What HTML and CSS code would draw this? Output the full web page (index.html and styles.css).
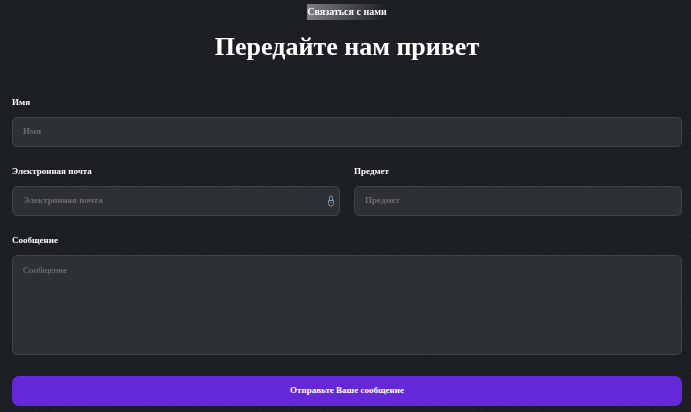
FILE: index.html
```html
<!DOCTYPE html>
<html lang="ru">
<head>
<meta charset="UTF-8" />
<meta name="viewport" content="width=device-width, initial-scale=1.0" />
<title>Связаться с нами</title>
<link rel="stylesheet" href="styles.css">
</head>
<body>

<section class="contact">
  <!-- Заголовок -->
  <header class="contact-header">
    <p class="tagline">Связаться с нами</p>
    <h1 class="title">Передайте нам привет</h1>
  </header>

  <!-- Форма обратной связи -->
  <form class="contact-form">
    <div class="field">
      <label for="name">Имя</label>
      <input type="text" id="name" name="name" placeholder="Имя">
    </div>
    <div class="row">
      <div class="field">
        <label for="email">Электронная почта</label>
        <div class="input-wrap">
          <input type="email" id="email" name="email" placeholder="Электронная почта">
          <svg class="lock" viewBox="0 0 8 12" aria-hidden="true">
            <path d="M2.500 5V2.500a1.500 1.500 0 0 1 3 0V5M1.500 5.500h5v3a2.500 2.500 0 0 1-5 0zM3.500 7.500h1" />
          </svg>
        </div>
      </div>
      <div class="field">
        <label for="subject">Предмет</label>
        <input type="text" id="subject" name="subject" placeholder="Предмет">
      </div>
    </div>
    <div class="field">
      <label for="message">Сообщение</label>
      <textarea id="message" name="message" placeholder="Сообщение"></textarea>
    </div>
    <button type="submit" class="submit">Отправьте Ваше сообщение</button>
  </form>
</section>

<!-- Зернистость фона -->
<svg class="grain" aria-hidden="true">
  <filter id="noise">
    <feTurbulence type="fractalNoise" baseFrequency="0.6" numOctaves="2" />
    <feColorMatrix values="0 0 0 0 1  0 0 0 0 1  0 0 0 0 1  1.2 0 0 0 -0.65" />
  </filter>
  <rect width="100%" height="100%" filter="url(#noise)" />
</svg>

</body>
</html>
```
FILE: styles.css
```css
* {
  box-sizing: border-box;
}

body {
  margin: 0;
  background-color: #1b1e23;
  color: #fff;
  font-family: "Liberation Serif", "Times New Roman", serif;
  font-size: 9px;
  line-height: 12px;
}

.contact {
  padding: 4px 9px 6px 12px;
}

/* Заголовок */
.contact-header {
  display: flex;
  flex-direction: column;
  align-items: center;
  gap: 11px;
  margin-bottom: 33px;
}
.tagline {
  margin: 0;
  font-size: 10px;
  font-weight: bold;
  line-height: 16px;
  background: linear-gradient(to right, #7c7e82, #1b1e23);
}
.title {
  margin: 0;
  font-size: 26px;
  line-height: 32px;
  font-weight: bold;
}

/* Форма */
.contact-form {
  display: flex;
  flex-direction: column;
  gap: 18px;
}
.row {
  display: grid;
  grid-template-columns: 1fr 1fr;
  gap: 14px;
}
.field {
  display: flex;
  flex-direction: column;
  gap: 9px;
}
label {
  font-weight: bold;
}
.input-wrap {
  position: relative;
}
input,
textarea {
  display: block;
  width: 100%;
  height: 30px;
  padding: 0 10px 2px;
  border: 1px solid #3f4246;
  border-radius: 5px;
  background-color: #2d3034;
  color: #fff;
  font: inherit;
  font-weight: bold;
}
textarea {
  height: 100px;
  padding: 8px 10px;
  font-weight: normal;
  resize: none;
}
input::placeholder {
  color: #6c6e71;
  opacity: 1;
}
textarea::placeholder {
  color: #7e8083;
  opacity: 1;
}

/* Значок внутри поля почты */
.lock {
  position: absolute;
  top: 9px;
  right: 5px;
  width: 8px;
  height: 12px;
  fill: none;
  stroke: #8196a9;
}

.submit {
  height: 30px;
  margin-top: 3px;
  padding-bottom: 3px;
  border: none;
  border-radius: 7px;
  background-color: #6528d9;
  color: #fff;
  font: inherit;
  font-weight: bold;
  cursor: pointer;
}

/* Шум поверх фона */
.grain {
  position: fixed;
  inset: 0;
  z-index: -1;
  width: 100%;
  height: 100%;
  opacity: 0.12;
  pointer-events: none;
}
```
